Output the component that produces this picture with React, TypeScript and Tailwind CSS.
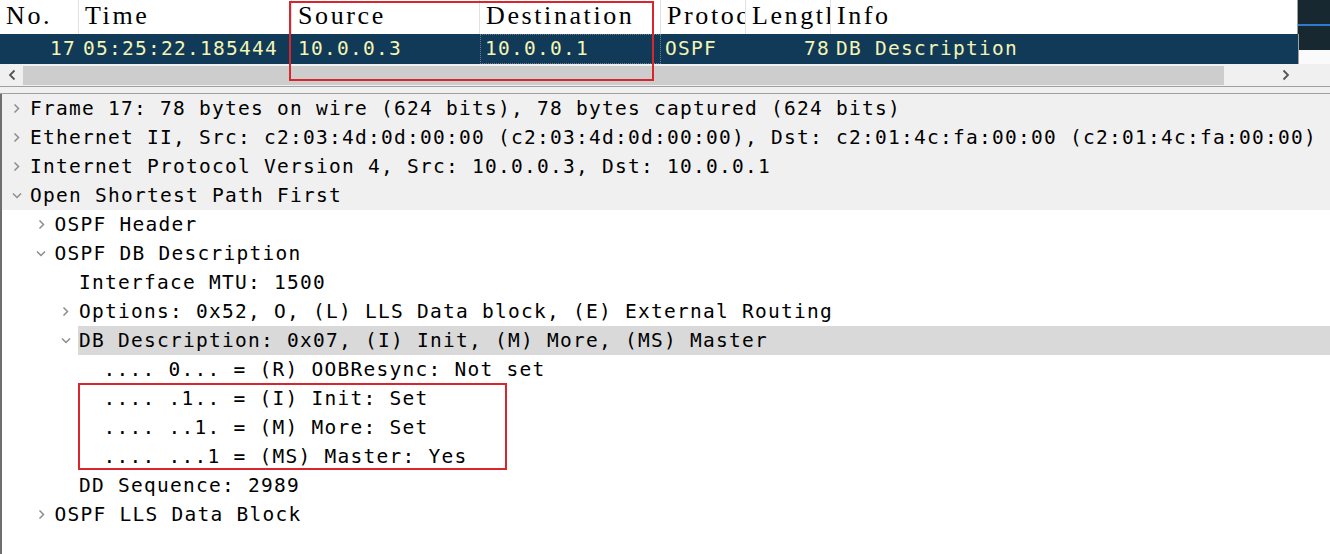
import React from 'react';

const mono = "font-['DejaVu_Sans_Mono','Liberation_Mono',monospace] text-[19.5px] tracking-[1.26px]";

type Node = {
    level: number;
    text: string;
    arrow?: 'right' | 'down';
    shaded?: boolean;
    selected?: boolean;
};

const tree: Node[] = [
    { level: 0, arrow: 'right', shaded: true, text: 'Frame 17: 78 bytes on wire (624 bits), 78 bytes captured (624 bits)' },
    { level: 0, arrow: 'right', shaded: true, text: 'Ethernet II, Src: c2:03:4d:0d:00:00 (c2:03:4d:0d:00:00), Dst: c2:01:4c:fa:00:00 (c2:01:4c:fa:00:00)' },
    { level: 0, arrow: 'right', shaded: true, text: 'Internet Protocol Version 4, Src: 10.0.0.3, Dst: 10.0.0.1' },
    { level: 0, arrow: 'down', shaded: true, text: 'Open Shortest Path First' },
    { level: 1, arrow: 'right', text: 'OSPF Header' },
    { level: 1, arrow: 'down', text: 'OSPF DB Description' },
    { level: 2, text: 'Interface MTU: 1500' },
    { level: 2, arrow: 'right', text: 'Options: 0x52, O, (L) LLS Data block, (E) External Routing' },
    { level: 2, arrow: 'down', selected: true, text: 'DB Description: 0x07, (I) Init, (M) More, (MS) Master' },
    { level: 3, text: '.... 0... = (R) OOBResync: Not set' },
    { level: 3, text: '.... .1.. = (I) Init: Set' },
    { level: 3, text: '.... ..1. = (M) More: Set' },
    { level: 3, text: '.... ...1 = (MS) Master: Yes' },
    { level: 2, text: 'DD Sequence: 2989' },
    { level: 1, arrow: 'right', text: 'OSPF LLS Data Block' },
];

const Chevron = ({ dir }: { dir: 'right' | 'down' | 'left' }) => {
    if (dir === 'down') {
        return (
            <svg width="10" height="7" viewBox="0 0 10 7">
                <polyline points="1,1.5 5,5.5 9,1.5" fill="none" stroke="#8c8c8c" strokeWidth="1.5" />
            </svg>
        );
    }
    if (dir === 'left') {
        return (
            <svg width="8" height="12" viewBox="0 0 8 12">
                <polyline points="6.5,1.5 2,6 6.5,10.5" fill="none" stroke="#555" strokeWidth="1.8" />
            </svg>
        );
    }
    return (
        <svg width="7" height="11" viewBox="0 0 7 11">
            <polyline points="1.5,1.5 5.5,5.5 1.5,9.5" fill="none" stroke="#8c8c8c" strokeWidth="1.5" />
        </svg>
    );
};

const headers = ['No.', 'Time', 'Source', 'Destination', 'Protocol', 'Length', 'Info'];

export default function App() {
    return (
        <div className="relative w-[1330px] h-[554px] overflow-hidden bg-white">
            {/* packet list */}
            <div className="grid grid-cols-[79px_213px_188px_181px_85px_85px_467px_32px]">
                {headers.map((h, i) => (
                    <div
                        key={h}
                        className={`h-[34px] overflow-hidden whitespace-nowrap border-r border-[#e2e2e2] pl-[6px] pt-[1px] font-['Liberation_Serif',serif] text-[26px] leading-[30px] tracking-[2.6px] text-black ${i === 6 ? 'border-r-[#a0a0a0]' : ''}`}
                    >
                        {h}
                    </div>
                ))}
                <div className="h-[34px] bg-[#172830] flex flex-col">
                    <div className="h-[24px]" />
                    <div className="h-[2px] bg-[#2b7bd1]" />
                </div>

                <div className={`h-[30px] bg-[#113a58] text-[#f4f4b4] ${mono} leading-[30px] text-right pr-[3px]`}>17</div>
                <div className={`h-[30px] bg-[#113a58] text-[#f4f4b4] ${mono} leading-[30px] pl-[4px] whitespace-nowrap overflow-hidden`}>05:25:22.185444</div>
                <div className={`h-[30px] bg-[#113a58] text-[#f4f4b4] ${mono} leading-[30px] pl-[6px]`}>10.0.0.3</div>
                <div className={`h-[30px] bg-[#113a58] text-[#f4f4b4] ${mono} leading-[28px] pl-[4px] border border-dotted border-[#6a7f8f]`}>10.0.0.1</div>
                <div className={`h-[30px] bg-[#113a58] text-[#f4f4b4] ${mono} leading-[30px] pl-[4px]`}>OSPF</div>
                <div className={`h-[30px] bg-[#113a58] text-[#f4f4b4] ${mono} leading-[30px] text-right pr-[1px]`}>78</div>
                <div className={`h-[30px] bg-[#113a58] text-[#f4f4b4] ${mono} leading-[30px] pl-[5px] whitespace-nowrap`}>DB Description</div>
                <div className="h-[30px] flex flex-col border-l border-[#a0a0a0]">
                    <div className="h-[16px] bg-[#172830]" />
                    <div className="flex-1 bg-[#fafafa]" />
                </div>
            </div>

            {/* horizontal scrollbar */}
            <div className="h-[22px] bg-[#f0f0f0] flex items-center">
                <div className="w-[23px] flex justify-center"><Chevron dir="left" /></div>
                <div className="w-[1201px] h-[19px] bg-[#cdcdcd]" />
                <div className="w-[58px]" />
                <div className="w-[8px] flex justify-center">
                    <svg width="8" height="12" viewBox="0 0 8 12">
                        <polyline points="1.5,1.5 6,6 1.5,10.5" fill="none" stroke="#555" strokeWidth="1.8" />
                    </svg>
                </div>
            </div>
            <div className="h-[1px] bg-[#a0a0a0]" />
            <div className="h-[6px] bg-[#f0f0f0]" />
            <div className="h-[1px] bg-[#a0a0a0]" />

            {/* packet details */}
            <div className="border-l-[2px] border-[#6e6e6e] h-[460px]">
                {tree.map((n, i) => (
                    <div
                        key={i}
                        className={`h-[29px] flex items-center whitespace-nowrap ${n.shaded ? 'bg-[#f0f0f0]' : ''}`}
                    >
                        <div style={{ width: 2 + n.level * 24.5 }} className="shrink-0" />
                        <div className="w-[25px] shrink-0 flex justify-center">
                            {n.arrow && <Chevron dir={n.arrow} />}
                        </div>
                        <div
                            className={`flex-1 h-[29px] pl-[1px] ${mono} leading-[29px] text-black ${n.selected ? 'bg-[#d9d9d9]' : ''}`}
                        >
                            {n.text}
                        </div>
                    </div>
                ))}
            </div>

            {/* annotation boxes */}
            <div className="absolute left-[289px] top-[1px] w-[365px] h-[80px] border-2 border-[#d9262c]" />
            <div className="absolute left-[78px] top-[383px] w-[429px] h-[87px] border-2 border-[#d9262c]" />
        </div>
    );
}
